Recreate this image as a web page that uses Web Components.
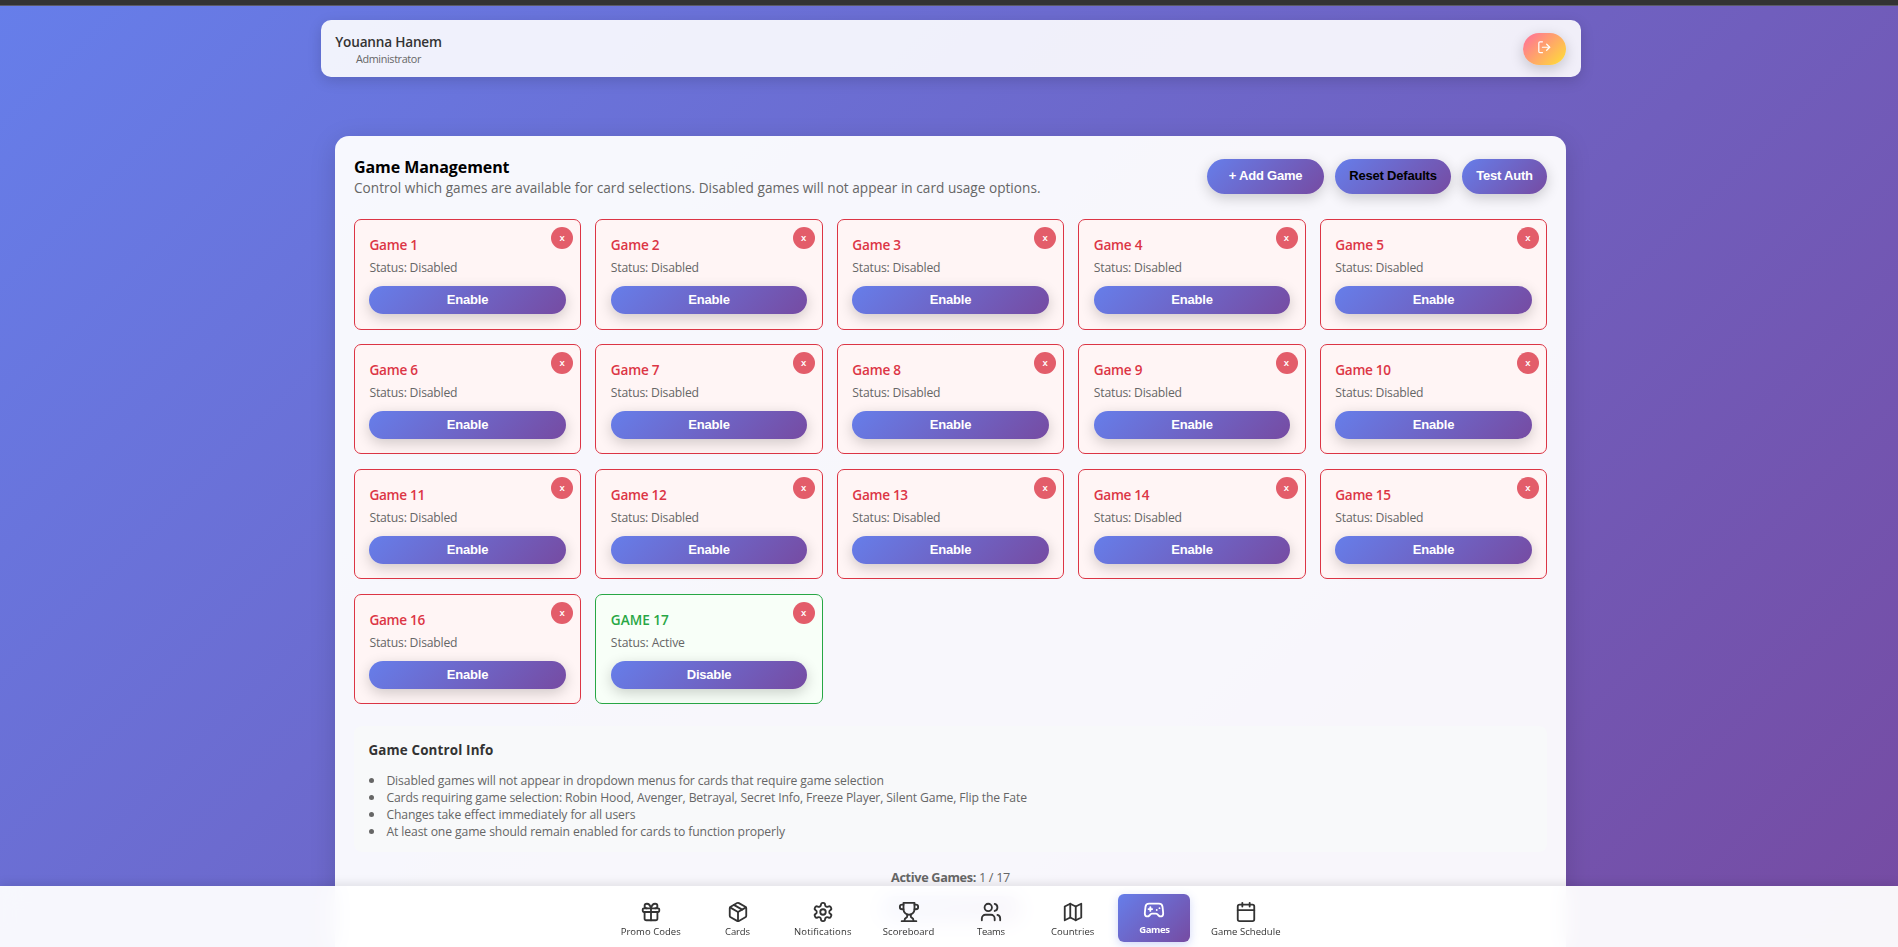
<!DOCTYPE html>
<html lang="en">
<head>
<meta charset="utf-8">
<title>Game Management</title>
<style>
html{height:100%;overflow:hidden}
body{margin:0;height:947px;overflow:hidden;font-family:"Open Sans","Noto Sans",sans-serif;font-size:12.8px;color:#333;background:linear-gradient(135deg,#667eea 0%,#764ba2 100%)}
</style>
</head>
<body>
<admin-app></admin-app>
<script>
const GRAD = 'linear-gradient(135deg,#667eea 0%,#764ba2 100%)';
const make = (name, html, after) => customElements.define(name, class extends HTMLElement {
  connectedCallback() {
    if (this.shadowRoot) return;
    const t = document.createElement('template');
    t.innerHTML = typeof html === 'function' ? html(this) : html;
    this.attachShadow({mode: 'open'}).append(t.content.cloneNode(true));
    if (after) after(this);
  }
});

// A single line of text, tracked so that it spans the width given in "w".
make('fit-text', `<style>:host{display:inline-block;white-space:nowrap}</style><span><slot></slot></span>`, el => {
  const w = +el.getAttribute('w');
  if (!w) return;
  const s = el.shadowRoot.querySelector('span');
  const n = el.textContent.length;
  const d = (w - s.getBoundingClientRect().width) / n;
  s.style.letterSpacing = d.toFixed(3) + 'px';
});

const ICONS = {
  logout: '<path d="M9 21H5a2 2 0 0 1-2-2V5a2 2 0 0 1 2-2h4"/><path d="m16 17 5-5-5-5"/><path d="M21 12H9"/>',
  gift: '<rect x="3" y="8" width="18" height="4" rx="1"/><path d="M12 8v13"/><path d="M19 12v7a2 2 0 0 1-2 2H7a2 2 0 0 1-2-2v-7"/><path d="M7.5 8a2.5 2.5 0 0 1 0-5A4.8 8 0 0 1 12 8a4.8 8 0 0 1 4.5-5 2.5 2.5 0 0 1 0 5"/>',
  box: '<path d="m7.5 4.27 9 5.15"/><path d="M21 8a2 2 0 0 0-1-1.73l-7-4a2 2 0 0 0-2 0l-7 4A2 2 0 0 0 3 8v8a2 2 0 0 0 1 1.73l7 4a2 2 0 0 0 2 0l7-4A2 2 0 0 0 21 16Z"/><path d="m3.3 7 8.7 5 8.7-5"/><path d="M12 22V12"/>',
  gear: '<path d="M12.22 2h-.44a2 2 0 0 0-2 2v.18a2 2 0 0 1-1 1.73l-.43.25a2 2 0 0 1-2 0l-.15-.08a2 2 0 0 0-2.73.73l-.22.38a2 2 0 0 0 .73 2.73l.15.1a2 2 0 0 1 1 1.72v.51a2 2 0 0 1-1 1.74l-.15.09a2 2 0 0 0-.73 2.73l.22.38a2 2 0 0 0 2.73.73l.15-.08a2 2 0 0 1 2 0l.43.25a2 2 0 0 1 1 1.73V20a2 2 0 0 0 2 2h.44a2 2 0 0 0 2-2v-.18a2 2 0 0 1 1-1.73l.43-.25a2 2 0 0 1 2 0l.15.08a2 2 0 0 0 2.73-.73l.22-.39a2 2 0 0 0-.73-2.73l-.15-.08a2 2 0 0 1-1-1.74v-.5a2 2 0 0 1 1-1.74l.15-.09a2 2 0 0 0 .73-2.73l-.22-.38a2 2 0 0 0-2.73-.73l-.15.08a2 2 0 0 1-2 0l-.43-.25a2 2 0 0 1-1-1.73V4a2 2 0 0 0-2-2z"/><circle cx="12" cy="12" r="3"/>',
  trophy: '<path d="M6 9H4.5a2.5 2.5 0 0 1 0-5H6"/><path d="M18 9h1.5a2.5 2.5 0 0 0 0-5H18"/><path d="M4 22h16"/><path d="M10 14.66V17c0 .55-.47.98-.97 1.21C7.85 18.75 7 20.24 7 22"/><path d="M14 14.66V17c0 .55.47.98.97 1.21C16.15 18.75 17 20.24 17 22"/><path d="M18 2H6v7a6 6 0 0 0 12 0V2Z"/>',
  users: '<path d="M16 21v-2a4 4 0 0 0-4-4H6a4 4 0 0 0-4 4v2"/><circle cx="9" cy="7" r="4"/><path d="M22 21v-2a4 4 0 0 0-3-3.87"/><path d="M16 3.13a4 4 0 0 1 0 7.75"/>',
  map: '<path d="M3 6l6-3 6 3 6-3v15l-6 3-6-3-6 3z"/><path d="M9 3v15"/><path d="M15 6v15"/>',
  pad: '<path d="M6 11h4"/><path d="M8 9v4"/><path d="M15 12h.01"/><path d="M18 10h.01"/><path d="M17.32 5H6.68a4 4 0 0 0-3.978 3.59c-.006.052-.01.101-.017.152C2.604 9.416 2 14.456 2 16a3 3 0 0 0 3 3c1 0 1.5-.5 2-1l1.414-1.414A2 2 0 0 1 9.828 16h4.344a2 2 0 0 1 1.414.586L17 18c.5.5 1 1 2 1a3 3 0 0 0 3-3c0-1.545-.604-6.584-.685-7.258-.007-.05-.011-.1-.017-.151A4 4 0 0 0 17.32 5z"/>',
  calendar: '<path d="M8 2v4"/><path d="M16 2v4"/><rect x="3" y="4" width="18" height="18" rx="2"/><path d="M3 10h18"/>'
};
make('ui-icon', el => `<style>:host{display:block;width:var(--s,22px);height:var(--s,22px)}svg{display:block;width:100%;height:100%}</style>
<svg viewBox="0 0 24 24" fill="none" stroke="currentColor" stroke-width="2" stroke-linecap="round" stroke-linejoin="round">${ICONS[el.getAttribute('name')]}</svg>`);

make('pill-button', `<style>
:host{display:flex;align-items:center;justify-content:center;box-sizing:border-box;height:35px;border-radius:18px;color:#fff;
background:${GRAD};box-shadow:0 4px 14px rgba(0,0,0,.19);font:bold 13px "Liberation Sans",Arial,sans-serif;padding-bottom:2px}
</style><slot></slot>`);

make('user-header', `<style>
:host{display:flex;box-sizing:border-box;width:1260px;height:57px;margin:14px 0 0 321px;padding:12px 15px 12px 14px;justify-content:space-between;
border-radius:10px;background:rgba(255,255,255,.9);box-shadow:0 4px 14px rgba(0,0,0,.15)}
.who{display:flex;flex-direction:column;align-items:center;width:107px}
.name{font-size:13.6px;font-weight:600;line-height:19px}
.role{font-size:10.8px;color:#666;line-height:14px;margin-top:1px}
.out{display:flex;justify-content:center;box-sizing:border-box;width:43px;height:32px;margin-top:1px;padding-top:7px;border-radius:16px;color:#fff;
background:linear-gradient(135deg,#ff6b9d,#ffe234);box-shadow:0 4px 14px rgba(0,0,0,.19);--s:14.5px}
</style>
<div class="who"><fit-text class="name" w="106.5">Youanna Hanem</fit-text><fit-text class="role" w="65">Administrator</fit-text></div>
<div class="out"><ui-icon name="logout"></ui-icon></div>`);

make('game-card', el => {
  const on = el.hasAttribute('active');
  return `<style>
:host{display:block;position:relative;box-sizing:border-box;height:110.4px;padding:14px 14.4px 0;border-radius:7px;
border:1px solid ${on ? '#28a745' : '#dc3545'};background:${on ? '#f8fff8' : '#fff5f5'}}
.name{display:block;font-size:13.6px;font-weight:600;line-height:22px;color:${on ? '#28a745' : '#dc3545'}}
.status{display:block;margin-top:2px;font-size:12.2px;line-height:20px;color:#666}
pill-button{height:28px;margin-top:8px;border-radius:14px;padding-bottom:1px}
.x{position:absolute;top:7px;right:7px;width:22px;height:22px;border-radius:50%;background:#e35d6a;color:#fff;
font:600 9.6px/21px "Open Sans","Noto Sans",sans-serif;text-align:center}
</style>
<fit-text class="name" w="${el.getAttribute('w')}">${el.textContent}</fit-text>
<fit-text class="status" w="${on ? 74 : 88}">Status: ${on ? 'Active' : 'Disabled'}</fit-text>
<pill-button><fit-text w="${on ? 44.5 : 41.5}">${on ? 'Disable' : 'Enable'}</fit-text></pill-button>
<div class="x">x</div>`;
});

make('info-box', `<style>
:host{display:block;box-sizing:border-box;height:126px;margin-top:22.4px;padding:13px 14.4px;border-radius:8px;background:#f8f9fa}
.h{display:block;font-size:13.4px;font-weight:700;line-height:22px}
ul{margin:10px 0 0;padding:0 0 0 18px;font-size:12.2px;line-height:17px;color:#666}
li{height:17px}
li::marker{font-size:15px}
</style>
<fit-text class="h" w="125">Game Control Info</fit-text>
<ul>
<li><fit-text w="497.5">Disabled games will not appear in dropdown menus for cards that require game selection</fit-text></li>
<li><fit-text w="640.5">Cards requiring game selection: Robin Hood, Avenger, Betrayal, Secret Info, Freeze Player, Silent Game, Flip the Fate</fit-text></li>
<li><fit-text w="249">Changes take effect immediately for all users</fit-text></li>
<li><fit-text w="398.5">At least one game should remain enabled for cards to function properly</fit-text></li>
</ul>`);

const games = Array.from({length: 16}, (_, i) => `<game-card w="${i < 9 ? 48.5 : 55.5}">Game ${i + 1}</game-card>`).join('') + '<game-card active w="58">GAME 17</game-card>';
make('game-panel', `<style>
:host{display:block;box-sizing:border-box;width:1231px;height:850px;margin:59px 0 0 335px;padding:20px 19px;border-radius:14px;
background:rgba(255,255,255,.95);box-shadow:0 6px 26px rgba(0,0,0,.15)}
header{display:flex;justify-content:space-between;height:63.2px}
.title{display:block;font-size:16px;font-weight:700;line-height:24px;margin-top:-1px;color:#000}
.sub{display:block;font-size:13.6px;line-height:18px;color:#666}
.actions{display:flex;gap:11px;padding-top:3px}
.grid{display:grid;grid-template-columns:repeat(5,1fr);gap:14.4px}
.count{margin-top:15px;text-align:center;font-size:12.7px;line-height:20px;color:#666}
.more{width:140px;height:26px;margin:9px auto 0;border-radius:13px;background:${GRAD}}
</style>
<header>
<div><fit-text class="title" w="155.5">Game Management</fit-text><fit-text class="sub" w="686.5">Control which games are available for card selections. Disabled games will not appear in card usage options.</fit-text></div>
<div class="actions">
<pill-button style="width:117px"><fit-text w="73.5">+ Add Game</fit-text></pill-button>
<pill-button style="width:116px;color:#000"><fit-text w="87.5">Reset Defaults</fit-text></pill-button>
<pill-button style="width:85px"><fit-text w="56.5">Test Auth</fit-text></pill-button>
</div>
</header>
<div class="grid">${games}</div>
<info-box></info-box>
<div class="count"><fit-text w="119"><b>Active Games:</b> 1 / 17</fit-text></div>
<div class="more"></div>`);

make('nav-item', el => {
  const on = el.hasAttribute('active');
  return `<style>
:host{display:flex;flex-direction:column;align-items:center;box-sizing:border-box;height:48px;border-radius:6px;padding-top:7px;
${on ? `padding-top:5px;color:#fff;background:${GRAD};box-shadow:0 3px 10px rgba(102,126,234,.3);` : 'color:#333;'}}
fit-text{font-size:9.5px;font-weight:${on ? 700 : 500};line-height:14px;margin-top:2px}
</style><ui-icon name="${el.getAttribute('icon')}"></ui-icon><fit-text w="${el.getAttribute('w')}">${el.textContent}</fit-text>`;
});

const tabs = [['gift','Promo Codes',60,82],['box','Cards',25,72],['gear','Notifications',57.5,79],['trophy','Scoreboard',51.5,73],['users','Teams',28,72],['map','Countries',43.5,72],['pad','Games',30.5,72],['calendar','Game Schedule',69.5,91]];
make('bottom-nav', `<style>
:host{position:fixed;left:0;right:0;bottom:0;display:flex;justify-content:center;gap:9.8px;box-sizing:border-box;height:61px;padding:8px 0 0 3px;
background:rgba(255,255,255,.95);backdrop-filter:blur(10px);box-shadow:0 -2px 10px rgba(0,0,0,.1)}
</style>${tabs.map(t => `<nav-item icon="${t[0]}" w="${t[2]}" style="width:${t[3]}px"${t[1] === 'Games' ? ' active' : ''}>${t[1]}</nav-item>`).join('')}`);

make('admin-app', `<style>
:host{display:flow-root;height:947px;overflow:hidden}
.strip{box-sizing:border-box;height:6px;background:#333;border-bottom:1px solid #5b5b68}
</style>
<div class="strip"></div>
<user-header></user-header>
<game-panel></game-panel>
<bottom-nav></bottom-nav>`);
</script>
</body>
</html>
